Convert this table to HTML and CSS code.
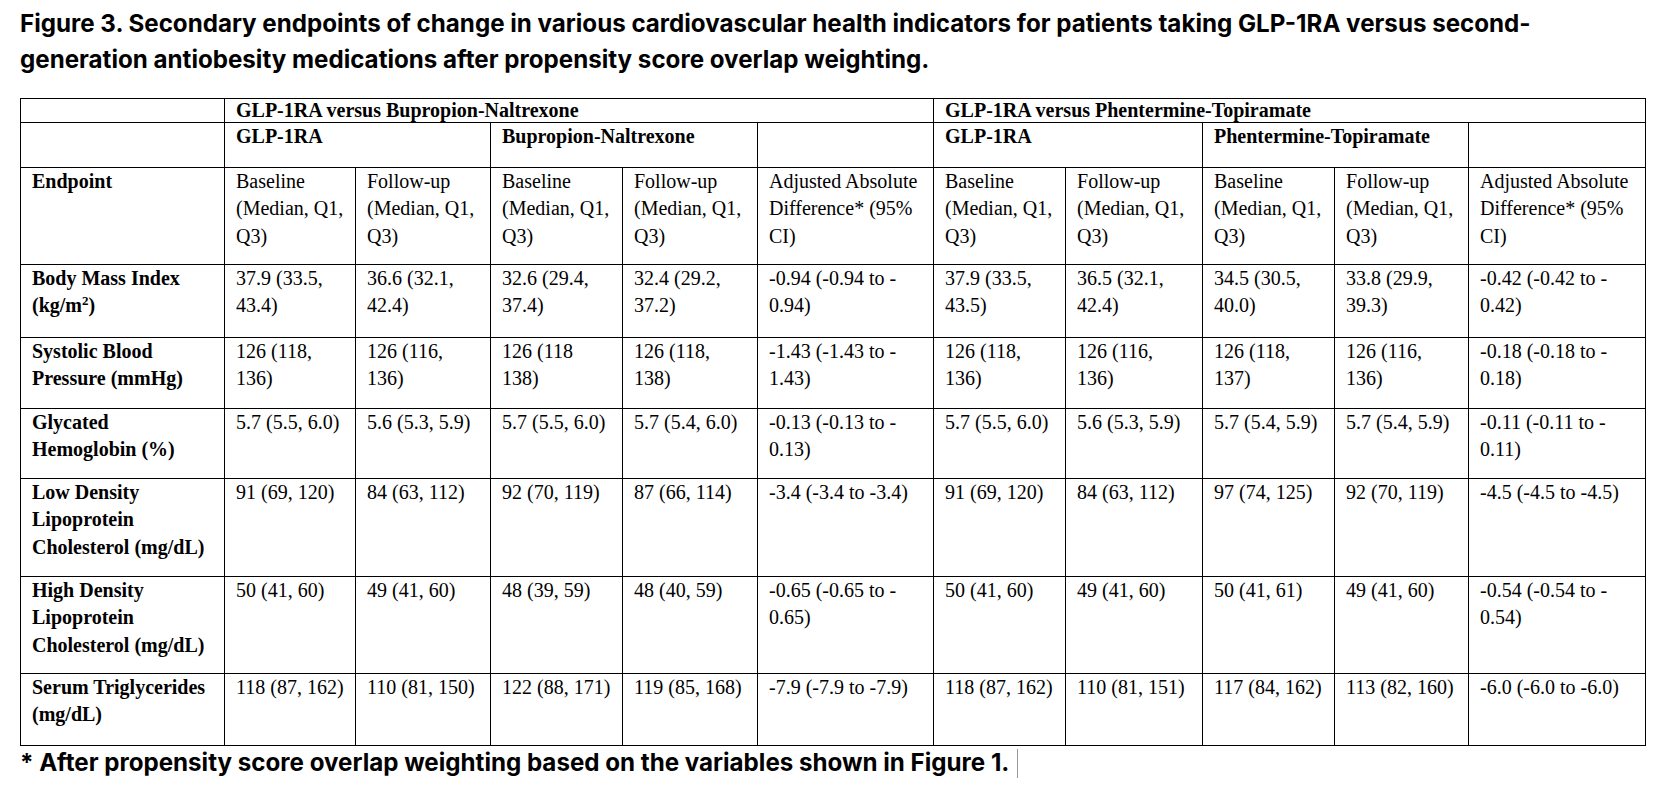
FILE: index.html
```html
<!DOCTYPE html>
<html>
<head>
<meta charset="utf-8">
<link rel="stylesheet" href="styles.css">
</head>
<body>
<div class="page">
  <h1 class="title">Figure 3. Secondary endpoints of change in various cardiovascular health indicators for patients taking GLP-1RA versus second-<br>generation antiobesity medications after propensity score overlap weighting.</h1>
  <table class="data">
    <colgroup>
      <col class="c-end"><col class="c-a"><col class="c-b"><col class="c-c"><col class="c-d"><col class="c-diff">
      <col class="c-e"><col class="c-f"><col class="c-g"><col class="c-h"><col class="c-diff2">
    </colgroup>
    <tr class="r-group">
      <td></td>
      <td colspan="5" class="b">GLP-1RA versus Bupropion-Naltrexone</td>
      <td colspan="5" class="b">GLP-1RA versus Phentermine-Topiramate</td>
    </tr>
    <tr class="r-arm">
      <td></td>
      <td colspan="2" class="b">GLP-1RA</td>
      <td colspan="2" class="b">Bupropion-Naltrexone</td>
      <td></td>
      <td colspan="2" class="b">GLP-1RA</td>
      <td colspan="2" class="b">Phentermine-Topiramate</td>
      <td></td>
    </tr>
    <tr class="r-head">
      <td class="b">Endpoint</td>
      <td>Baseline<br>(Median, Q1,<br>Q3)</td>
      <td>Follow-up<br>(Median, Q1,<br>Q3)</td>
      <td>Baseline<br>(Median, Q1,<br>Q3)</td>
      <td>Follow-up<br>(Median, Q1,<br>Q3)</td>
      <td>Adjusted Absolute<br>Difference* (95%<br>CI)</td>
      <td>Baseline<br>(Median, Q1,<br>Q3)</td>
      <td>Follow-up<br>(Median, Q1,<br>Q3)</td>
      <td>Baseline<br>(Median, Q1,<br>Q3)</td>
      <td>Follow-up<br>(Median, Q1,<br>Q3)</td>
      <td>Adjusted Absolute<br>Difference* (95%<br>CI)</td>
    </tr>
    <tr class="r-bmi">
      <td class="b">Body Mass Index<br>(kg/m<sup>2</sup>)</td>
      <td>37.9 (33.5,<br>43.4)</td>
      <td>36.6 (32.1,<br>42.4)</td>
      <td>32.6 (29.4,<br>37.4)</td>
      <td>32.4 (29.2,<br>37.2)</td>
      <td>-0.94 (-0.94 to -<br>0.94)</td>
      <td>37.9 (33.5,<br>43.5)</td>
      <td>36.5 (32.1,<br>42.4)</td>
      <td>34.5 (30.5,<br>40.0)</td>
      <td>33.8 (29.9,<br>39.3)</td>
      <td>-0.42 (-0.42 to -<br>0.42)</td>
    </tr>
    <tr class="r-sbp">
      <td class="b">Systolic Blood<br>Pressure (mmHg)</td>
      <td>126 (118,<br>136)</td>
      <td>126 (116,<br>136)</td>
      <td>126 (118<br>138)</td>
      <td>126 (118,<br>138)</td>
      <td>-1.43 (-1.43 to -<br>1.43)</td>
      <td>126 (118,<br>136)</td>
      <td>126 (116,<br>136)</td>
      <td>126 (118,<br>137)</td>
      <td>126 (116,<br>136)</td>
      <td>-0.18 (-0.18 to -<br>0.18)</td>
    </tr>
    <tr class="r-hba">
      <td class="b">Glycated<br>Hemoglobin (%)</td>
      <td>5.7 (5.5, 6.0)</td>
      <td>5.6 (5.3, 5.9)</td>
      <td>5.7 (5.5, 6.0)</td>
      <td>5.7 (5.4, 6.0)</td>
      <td>-0.13 (-0.13 to -<br>0.13)</td>
      <td>5.7 (5.5, 6.0)</td>
      <td>5.6 (5.3, 5.9)</td>
      <td>5.7 (5.4, 5.9)</td>
      <td>5.7 (5.4, 5.9)</td>
      <td>-0.11 (-0.11 to -<br>0.11)</td>
    </tr>
    <tr class="r-ldl">
      <td class="b">Low Density<br>Lipoprotein<br>Cholesterol (mg/dL)</td>
      <td>91 (69, 120)</td>
      <td>84 (63, 112)</td>
      <td>92 (70, 119)</td>
      <td>87 (66, 114)</td>
      <td>-3.4 (-3.4 to -3.4)</td>
      <td>91 (69, 120)</td>
      <td>84 (63, 112)</td>
      <td>97 (74, 125)</td>
      <td>92 (70, 119)</td>
      <td>-4.5 (-4.5 to -4.5)</td>
    </tr>
    <tr class="r-hdl">
      <td class="b">High Density<br>Lipoprotein<br>Cholesterol (mg/dL)</td>
      <td>50 (41, 60)</td>
      <td>49 (41, 60)</td>
      <td>48 (39, 59)</td>
      <td>48 (40, 59)</td>
      <td>-0.65 (-0.65 to -<br>0.65)</td>
      <td>50 (41, 60)</td>
      <td>49 (41, 60)</td>
      <td>50 (41, 61)</td>
      <td>49 (41, 60)</td>
      <td>-0.54 (-0.54 to -<br>0.54)</td>
    </tr>
    <tr class="r-tg">
      <td class="b">Serum Triglycerides<br>(mg/dL)</td>
      <td>118 (87, 162)</td>
      <td>110 (81, 150)</td>
      <td>122 (88, 171)</td>
      <td>119 (85, 168)</td>
      <td>-7.9 (-7.9 to -7.9)</td>
      <td>118 (87, 162)</td>
      <td>110 (81, 151)</td>
      <td>117 (84, 162)</td>
      <td>113 (82, 160)</td>
      <td>-6.0 (-6.0 to -6.0)</td>
    </tr>
  </table>
  <p class="note">* After propensity score overlap weighting based on the variables shown in Figure 1.<span class="caret"></span></p>
</div>
</body>
</html>
```

FILE: styles.css
```css
html, body {
  margin: 0;
  padding: 0;
  background: #ffffff;
  color: #000000;
}

.page {
  padding: 6px 0 0 20px;
}

.title {
  margin: 0 0 21px 0;
  font-family: "Inter", "Liberation Sans", sans-serif;
  font-weight: 700;
  font-size: 24.15px;
  line-height: 35.5px;
  color: #000;
}

.data {
  border-collapse: collapse;
  table-layout: fixed;
  width: 1626px;
  font-family: "Liberation Serif", "Times New Roman", serif;
  font-size: 20px;
  line-height: 27.3px;
}

.data td {
  border: 1px solid #000;
  padding: 0 4px 0 11px;
  vertical-align: top;
  text-align: left;
  white-space: nowrap;
}

.data .b {
  font-weight: 700;
}

.data sup {
  font-size: 13px;
  line-height: 0;
  vertical-align: 7px;
}

.c-end { width: 204px; }
.c-a { width: 131px; }
.c-b { width: 135px; }
.c-c { width: 132px; }
.c-d { width: 135px; }
.c-diff { width: 176px; }
.c-e { width: 132px; }
.c-f { width: 137px; }
.c-g { width: 132px; }
.c-h { width: 134px; }
.c-diff2 { width: 177px; }

.r-group td { height: 23px; line-height: 23px; }
.r-arm td { height: 44px; }
.r-head td { height: 96px; }
.r-bmi td { height: 72px; }
.r-sbp td { height: 70px; }
.r-hba td { height: 69px; }
.r-ldl td { height: 97px; }
.r-hdl td { height: 96px; }
.r-tg td { height: 71px; }

.note {
  margin: 2px 0 0 0;
  font-family: "Inter", "Liberation Sans", sans-serif;
  font-weight: 700;
  font-size: 24.15px;
  line-height: 30px;
  display: flex;
  align-items: center;
}

.caret {
  display: inline-block;
  width: 0;
  height: 29px;
  border-left: 1px solid #9a9a9a;
  margin-left: 8px;
}
```
